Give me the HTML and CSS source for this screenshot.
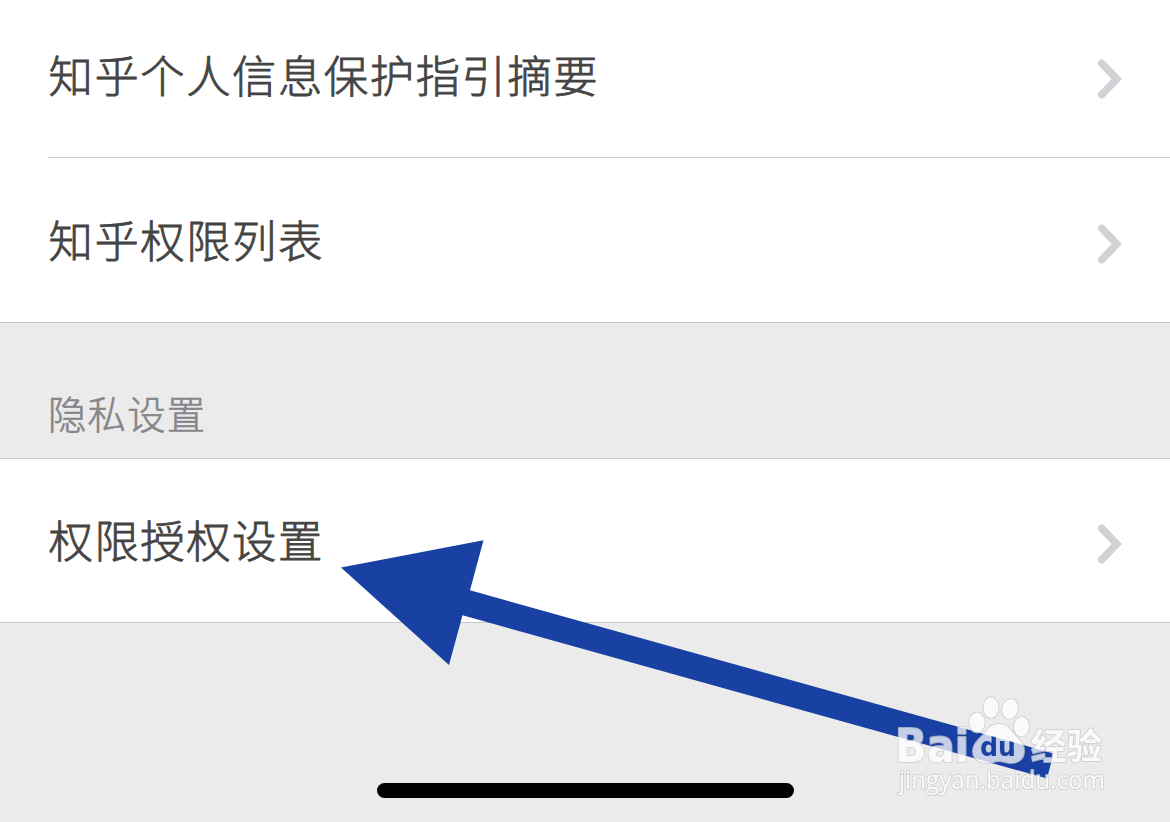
FILE: index.html
```html
<!DOCTYPE html>
<html lang="zh-CN">
<head>
  <meta charset="utf-8">
  <title>隐私设置</title>
  <link rel="stylesheet" href="styles.css">
</head>
<body>
  <div class="screen">
    <div class="list">
      <div class="row row-inset">
        <span class="row-title">知乎个人信息保护指引摘要</span>
        <svg class="chevron" viewBox="0 0 26 42"><path d="M4.8 5.3 L19.8 21 L4.8 36.7"/></svg>
      </div>
      <div class="row">
        <span class="row-title">知乎权限列表</span>
        <svg class="chevron" viewBox="0 0 26 42"><path d="M4.8 5.3 L19.8 21 L4.8 36.7"/></svg>
      </div>
    </div>
    <div class="section-header">隐私设置</div>
    <div class="list">
      <div class="row row-last">
        <span class="row-title">权限授权设置</span>
        <svg class="chevron" viewBox="0 0 26 42"><path d="M4.8 5.3 L19.8 21 L4.8 36.7"/></svg>
      </div>
    </div>
    <div class="footer">
      <div class="home-indicator"></div>
    </div>

    <svg class="arrow" viewBox="0 0 720 250">
      <polygon points="1,27.5 143.5,0.3 130,50.3 713.5,213.5 707,238.5 122.5,75.3 109,125"/>
    </svg>

    <svg class="watermark" viewBox="0 0 250 130">
      <defs>
        <mask id="du-cutout" maskUnits="userSpaceOnUse" x="0" y="0" width="250" height="130">
          <rect width="250" height="130" fill="#fff"/>
          <text class="logo-du" x="100" y="76" textLength="36" lengthAdjust="spacingAndGlyphs">du</text>
        </mask>
      </defs>
      <g class="mark">
        <ellipse cx="97" cy="42.5" rx="7.7" ry="9.9"/>
        <ellipse cx="111" cy="27.7" rx="7.4" ry="10.4"/>
        <ellipse cx="130" cy="29" rx="7.8" ry="9.9" transform="rotate(12 130 29)"/>
        <ellipse cx="141.5" cy="46.7" rx="7.7" ry="9.6"/>
        <path mask="url(#du-cutout)" d="M119 44 C126 44 130 48 133 53 C137 58 144 62 144 71 C144 79 138 83 131 83 C126 83 124 81 119 81 C114 81 112 83 107 83 C99 83 93 79 93 71 C93 63 101 58 105 53 C108 48 112 44 119 44 Z"/>
        <text class="logo-bai" x="15" y="82" textLength="74" lengthAdjust="spacingAndGlyphs">Bai</text>
        <text class="logo-cn" x="151" y="79" textLength="71" lengthAdjust="spacingAndGlyphs">经验</text>
        <text class="logo-url" x="19" y="109" textLength="206" lengthAdjust="spacingAndGlyphs">jingyan.baidu.com</text>
      </g>
    </svg>
  </div>
</body>
</html>
```
FILE: styles.css
```css
body {
  margin: 0;
  background-color: #ebebeb;
  font-family: "Noto Sans CJK SC", sans-serif;
}

.screen {
  position: relative;
  width: 1170px;
  height: 822px;
  overflow: hidden;
  display: flex;
  flex-direction: column;
}

.list {
  background-color: white;
  border-bottom: 1px solid #c8c8cb;
}

.row {
  display: flex;
  justify-content: space-between;
  align-items: center;
  height: 164px;
  padding: 0 47px 0 48px;
}

.row-inset {
  height: 157px;
  padding: 0;
  margin-left: 48px;
  border-bottom: 1px solid #c8c8cb;
}

.row-last {
  height: 163px;
}

.row-title {
  margin-top: -3px;
  padding-left: 0.5px;
  font-size: 44.4px;
  font-weight: 300;
  line-height: 60px;
  letter-spacing: 1.5px;
  color: #444;
  -webkit-text-stroke: 0.8px #444;
}

.row-inset .row-title {
  margin-top: -9px;
}

.chevron {
  width: 26px;
  height: 42px;
  margin-top: 8px;
}

.row-inset .chevron {
  margin-top: 1px;
  margin-right: 47px;
}

.row-last .chevron {
  margin-top: 7px;
}

.chevron path {
  fill: none;
  stroke: #d1d1d6;
  stroke-width: 7.5;
  stroke-linecap: round;
  stroke-linejoin: miter;
}

.section-header {
  box-sizing: border-box;
  height: 136px;
  padding: 63px 48px 0;
  border-bottom: 1px solid #c8c8cb;
  font-size: 38.4px;
  font-weight: 300;
  line-height: 52px;
  letter-spacing: 1.2px;
  color: #85858a;
  -webkit-text-stroke: 0.6px #85858a;
}

.footer {
  flex: 1;
  display: flex;
  justify-content: center;
  align-items: flex-end;
  padding-bottom: 24px;
}

.home-indicator {
  width: 417px;
  height: 15px;
  border-radius: 8px;
  background-color: black;
}

/* overlays */
.arrow {
  position: absolute;
  left: 340px;
  top: 540px;
  width: 720px;
  height: 250px;
  fill: #1941a3;
}

.watermark {
  position: absolute;
  left: 880px;
  top: 680px;
  width: 250px;
  height: 130px;
}

.mark {
  opacity: 0.75;
  fill: white;
  stroke: #ccc;
  stroke-width: 2;
  stroke-linejoin: round;
  paint-order: stroke;
}

.logo-bai {
  font: bold 47px "DejaVu Sans", sans-serif;
}

.logo-du {
  font: bold 27px "DejaVu Sans", sans-serif;
  fill: black;
  stroke: none;
}

.logo-cn {
  font: bold 35px "Noto Sans CJK SC", sans-serif;
}

.logo-url {
  font: 500 25px "Open Sans", sans-serif;
}
```
